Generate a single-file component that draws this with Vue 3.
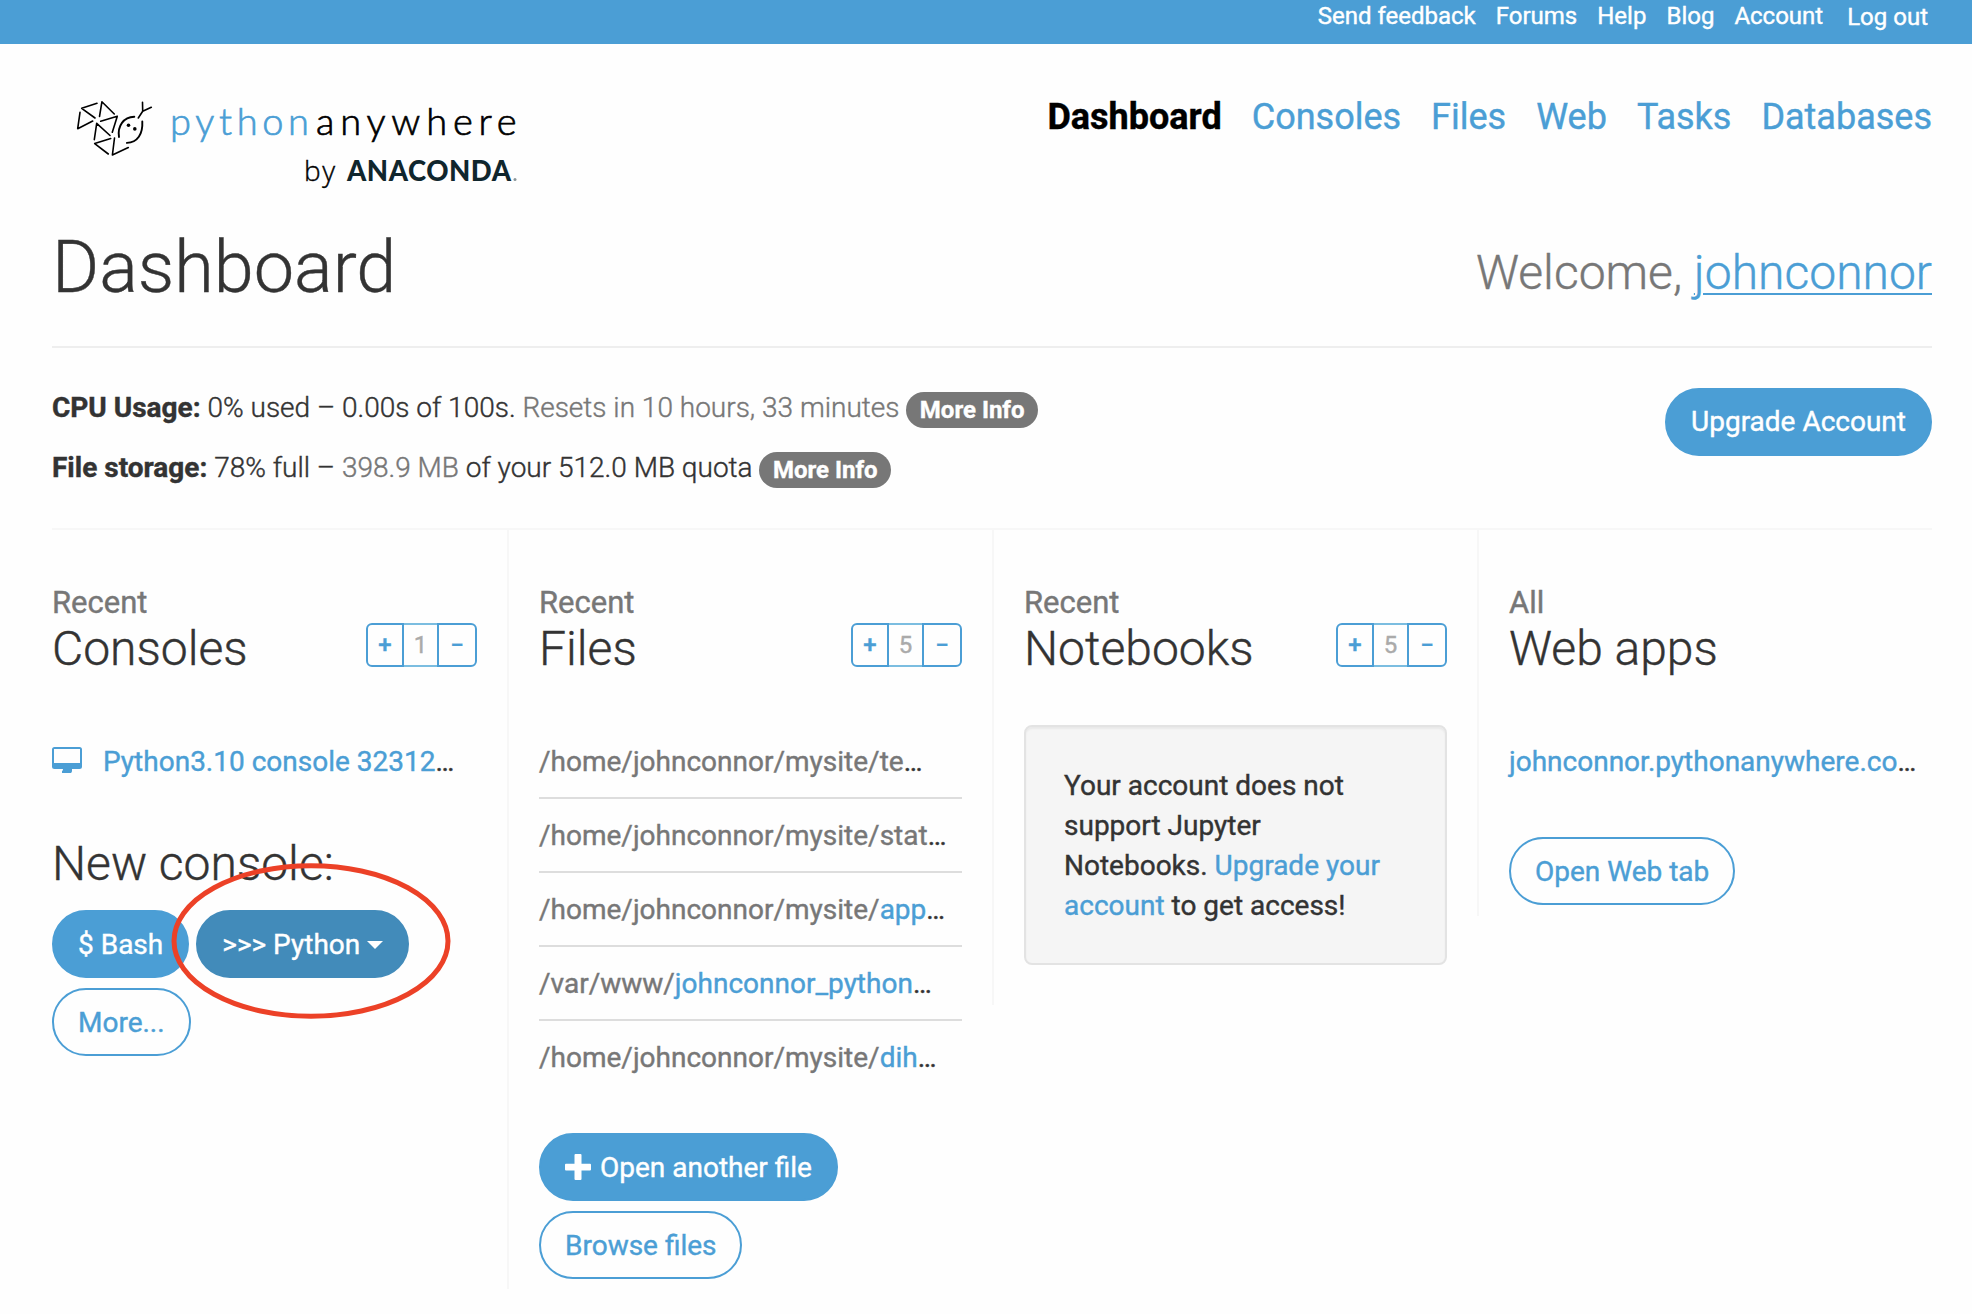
<script setup>
const topLinks = ['Send feedback', 'Forums', 'Help', 'Blog', 'Account', 'Log out']
const nav = ['Dashboard', 'Consoles', 'Files', 'Web', 'Tasks', 'Databases']
const files = [
  { dir: '/home/johnconnor/mysite/te', name: '' },
  { dir: '/home/johnconnor/mysite/stat', name: '' },
  { dir: '/home/johnconnor/mysite/', name: 'app' },
  { dir: '/var/www/', name: 'johnconnor_python' },
  { dir: '/home/johnconnor/mysite/', name: 'dih' },
]
</script>

<template>
  <div class="page">
    <div class="topbar">
      <a v-for="l in topLinks" :key="l">{{ l }}</a>
    </div>

    <header class="header">
      <svg class="logo" width="450" height="100" viewBox="70 94 450 100">
        <g fill="none" stroke="#000" stroke-width="1.6" stroke-linecap="round">
          <path d="M81.700 108.300 97 103.300M101.900 101.800 99.500 116.500M101.900 101.800 114.300 114M81.700 108.300 95 118M80 112.300 77.700 128.700M77.700 128.700 92.700 121M100.700 121.300 117.300 116.300M117.300 116.300 112.300 132.300M96.700 123.300 110 135.500M96.700 123.300 94.300 139.700M94.700 143.600 110.700 138.600M94.700 143.600 108.300 154M114.500 138 112.400 155M112.400 155 128.300 147.500" />
          <path stroke-width="1.900" d="M119 137C117.300 126 123.500 117 134.300 116.700M142.300 121.500C143 134 137.500 142.500 126.900 142.900" />
          <path d="M138.300 118 142.700 111.300M142.700 111.300 142.500 102.300M142.700 111.300 151.300 107.300" />
        </g>
        <circle cx="128.500" cy="125.300" r="1.800" /><circle cx="134.800" cy="128.900" r="1.800" />
        <text class="word blue" x="170" y="135" textLength="139">python</text>
        <text class="word" x="316" y="135" textLength="200.500">anywhere</text>
        <text class="by" x="304" y="181" textLength="31">by</text>
        <text class="ana" x="347" y="181" textLength="164">ANACONDA</text>
        <circle cx="515" cy="179.500" r="1.500" fill="#8a9699" />
      </svg>
      <nav class="nav">
        <a v-for="(n, i) in nav" :key="n" :class="{ active: i === 0 }">{{ n }}</a>
      </nav>
    </header>

    <div class="title">
      <h1>Dashboard</h1>
      <div class="welcome">Welcome, <a>johnconnor</a></div>
    </div>

    <section class="usage">
      <div>
        <p><b>CPU Usage:</b> 0% used – 0.00s of 100s. <span class="muted">Resets in 10 hours, 33 minutes</span> <span class="label">More Info</span></p>
        <p><b>File storage:</b> 78% full – <span class="muted">398.9 MB</span> of your 512.0 MB quota <span class="label">More Info</span></p>
      </div>
      <a class="btn">Upgrade Account</a>
    </section>

    <main class="cols">
      <section class="col consoles">
        <div class="head">
          <h2><small>Recent</small>Consoles</h2>
          <div class="stepper"><span class="s plus">+</span><span class="n">1</span><span class="s minus">−</span></div>
        </div>
        <div class="line console">
          <svg width="30" height="26" viewBox="0 0 30 26" fill="#4b9ed5">
            <path fill-rule="evenodd" d="M2.500 0h25A2.500 2.500 0 0 1 30 2.500v17a2.500 2.500 0 0 1-2.500 2.500H20v2q0 1-1 2h-9v-2q1 0 1-2H2.500A2.500 2.500 0 0 1 0 19.500v-17A2.500 2.500 0 0 1 2.500 0ZM2 2v14h26V2Z" />
          </svg>
          <span><a>Python3.10 console 32312</a>…</span>
        </div>
        <h2 class="new">New console:</h2>
        <div class="btns">
          <a class="btn">$ Bash</a>
          <span class="marked">
            <a class="btn dark">&gt;&gt;&gt; Python <i class="caret"></i></a>
            <svg class="ring" width="280" height="158" viewBox="0 0 280 158">
              <ellipse cx="140" cy="79" rx="137" ry="75.300" fill="none" stroke="#ec4127" stroke-width="5" />
            </svg>
          </span>
          <a class="btn outline">More...</a>
        </div>
      </section>

      <section class="col files">
        <div class="head">
          <h2><small>Recent</small>Files</h2>
          <div class="stepper"><span class="s plus">+</span><span class="n">5</span><span class="s minus">−</span></div>
        </div>
        <ul>
          <li v-for="f in files" :key="f.dir + f.name" class="line"><span class="muted">{{ f.dir }}</span><a>{{ f.name }}</a>…</li>
        </ul>
        <div class="btns">
          <a class="btn"><svg class="plusicon" width="26" height="26" viewBox="0 0 26 26"><path fill="#fff" d="M10.500 0h5q1 0 1 1v8.800H25q1 0 1 1v4.700q0 1-1 1h-8.500V25q0 1-1 1h-5q-1 0-1-1v-8.500H1q-1 0-1-1v-4.700q0-1 1-1h8.500V1q0-1 1-1Z" /></svg>Open another file</a>
          <a class="btn outline browse">Browse files</a>
        </div>
      </section>

      <section class="col notebooks">
        <div class="head">
          <h2><small>Recent</small>Notebooks</h2>
          <div class="stepper"><span class="s plus">+</span><span class="n">5</span><span class="s minus">−</span></div>
        </div>
        <div class="well">Your account does not support Jupyter Notebooks. <a>Upgrade your account</a> to get access!</div>
      </section>

      <section class="col web">
        <div class="head">
          <h2><small>All</small>Web apps</h2>
        </div>
        <div class="line"><a>johnconnor.pythonanywhere.co</a>…</div>
        <div class="btns"><a class="btn outline">Open Web tab</a></div>
      </section>
    </main>
  </div>
</template>

<style>
body { margin: 0; background: #fefefe; }
</style>

<style scoped>
* { box-sizing: border-box; }
.page { width: 1972px; height: 1314px; overflow: hidden; background: #fefefe; color: #333; font: 400 28px/40px Roboto, sans-serif; -webkit-text-stroke: 0.4px; }
a { color: #4b9ed5; }
h1, h2, p, ul { margin: 0; padding: 0; font-weight: 300; }
.muted { color: #777; }
.topbar { height: 44px; background: #4b9ed5; display: flex; justify-content: flex-end; gap: 20px; padding: 0 44px 0 0; font-size: 24px; line-height: 32px; }
.topbar a { color: #fff; white-space: nowrap; }
.topbar a:last-child { margin-left: 4px; padding-top: 1px; }
.header { height: 176px; display: flex; justify-content: space-between; align-items: flex-start; padding: 50px 40px 0 70px; }
.logo { -webkit-text-stroke: 0; }
.word { font: 300 38px Lato, sans-serif; fill: #000; stroke: #000; stroke-width: 0.7px; }
.word.blue { fill: #4b9ed5; stroke: #4b9ed5; }
.by { font: 300 28px "Open Sans", sans-serif; stroke: #000; stroke-width: 0.4px; }
.ana { font: 900 27.500px Lato, sans-serif; fill: #10262d; }
.nav { display: flex; gap: 30px; font-size: 36px; line-height: 44px; padding-top: 1px; color: #4b9ed5; }
.nav .active { color: #000; font-weight: 700; }
.title { height: 128px; margin: 0 40px 0 52px; border-bottom: 2px solid #eee; display: flex; justify-content: space-between; }
h1 { font-size: 72px; line-height: 80px; padding-top: 8px; }
.welcome { font-size: 48px; font-weight: 300; line-height: 56px; color: #777; padding-top: 25px; }
.welcome a { text-decoration: underline; text-decoration-thickness: 2px; text-underline-offset: 4px; text-decoration-skip-ink: auto; }
.usage { height: 182px; margin: 0 40px 0 52px; border-bottom: 2px solid #f7f7f7; padding-top: 40px; display: flex; justify-content: space-between; align-items: flex-start; font-weight: 300; }
.usage p { height: 40px; margin-bottom: 20px; }
.usage b { font-weight: 700; }
.usage .btn { font-weight: 400; padding-top: 0; }
.label { display: inline-block; height: 36px; line-height: 36px; vertical-align: -1px; padding: 0 13.500px; border-radius: 18px; background: #777; color: #fff; font-size: 24px; font-weight: 700; }
.btn { display: inline-flex; align-items: center; height: 68px; padding: 1px 24px 0; border: 2px solid #4b9ed5; border-radius: 34px; background: #4b9ed5; color: #fff; white-space: pre; }
.btn.outline { background: #fefefe; color: #4b9ed5; }
.btn.browse { padding-right: 23px; }
.btn.dark { background: #428bba; border-color: #428bba; }
.btns { display: flex; flex-wrap: wrap; gap: 10px 7px; align-items: flex-start; }
.cols { display: flex; align-items: flex-start; padding: 0 40px 0 52px; }
.col { width: 485px; border-left: 2px solid #f7f7f7; padding: 50px 30px 10px; }
.col.consoles { width: 455px; border: 0; padding-left: 0; }
.col.web { padding-right: 0; width: 455px; }
.head { display: flex; justify-content: space-between; align-items: flex-end; height: 106px; }
h2 { font-size: 48px; line-height: 52px; white-space: nowrap; align-self: flex-start; }
.head h2 { padding-top: 3px; }
h2 small { display: block; font-size: 31px; font-weight: 400; line-height: 40px; color: #777; }
.stepper { display: flex; height: 44px; margin-bottom: 19px; font-size: 24px; line-height: 40px; text-align: center; }
.s { border: 2px solid #4b9ed5; color: #4b9ed5; width: 38px; border-radius: 6px 0 0 6px; font-weight: 500; }
.s.minus { width: 40px; border-radius: 0 6px 6px 0; }
.n { width: 33px; border: solid #7bbde0; border-width: 2px 0; color: #aaa; }
.line { white-space: nowrap; height: 40px; }
.console, .web .line { margin-top: 56px; }
.console { display: flex; align-items: center; gap: 21px; }
.console svg { margin-top: -4px; }
.new { margin: 52px 0 16px; line-height: 60px; }
.marked { position: relative; }
.ring { position: absolute; left: -25px; top: -48px; }
.caret { border: solid transparent; border-width: 8px 8px 0; border-top-color: #fff; }
ul { list-style: none; padding-top: 39px; }
ul .line { height: 74px; padding-top: 17px; border-bottom: 2px solid #ddd; font-weight: 400; }
ul .line:last-child { border: 0; }
.files .btns { flex-direction: column; margin-top: 38px; }
.plusicon { margin: -2px 9px 0 0; }
.well { width: 423px; height: 240px; margin: 39px 0 30px; border: 2px solid #e3e3e3; border-radius: 8px; padding: 39px 38px 37px; background: #f5f5f5; box-shadow: inset 0 2px 2px rgba(0,0,0,.05); }
.web .btns { margin-top: 55px; padding-bottom: 1px; }
</style>
